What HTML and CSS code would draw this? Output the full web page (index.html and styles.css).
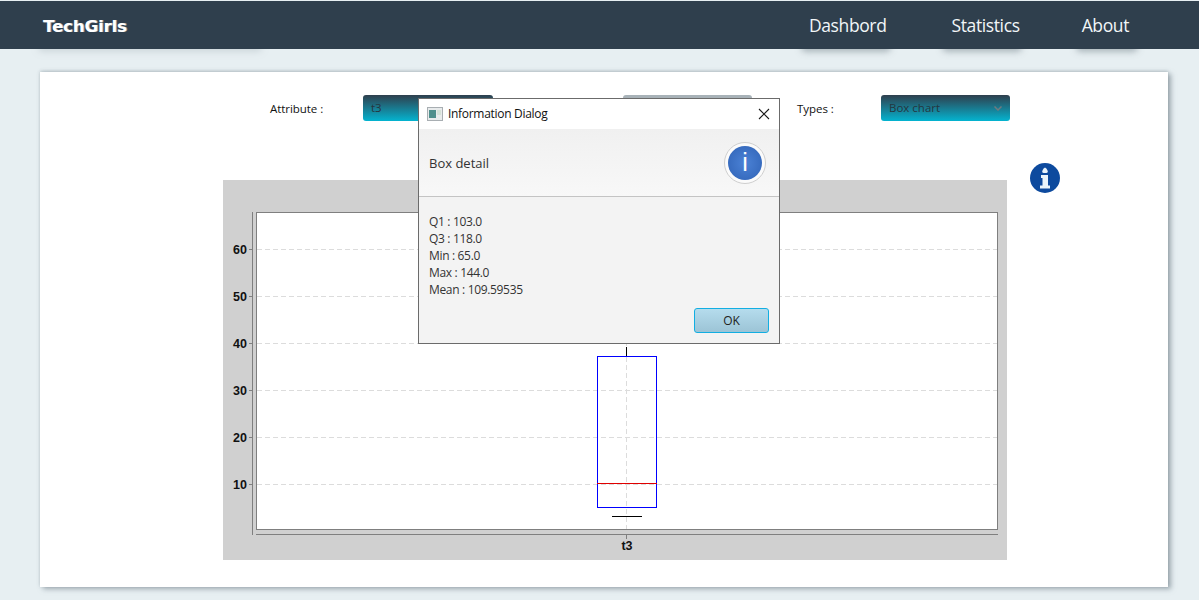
FILE: index.html
```html
<!DOCTYPE html>
<html lang="en">
<head>
<meta charset="utf-8">
<title>TechGirls</title>
<link rel="stylesheet" href="styles.css">
</head>
<body>
<header class="topbar">
  <div class="logo">TechGirls</div>
  <nav class="nav">
    <a class="nav-link nav-dash">Dashbord</a>
    <a class="nav-link nav-stats">Statistics</a>
    <a class="nav-link nav-about">About</a>
  </nav>
</header>
<div class="shadow-strip">
  <span class="blur blur-logo"></span>
  <span class="blur blur-dash"></span>
  <span class="blur blur-stats"></span>
  <span class="blur blur-about"></span>
</div>
<main class="card">
  <div class="controls">
    <span class="label label-attr">Attribute :</span>
    <div class="combo combo-attr">t3</div>
    <div class="combo combo-disabled"></div>
    <span class="label label-types">Types :</span>
    <div class="combo combo-types">Box chart
      <svg class="chevron" width="8" height="5" viewBox="0 0 8 5"><path d="M.5.500l3.500 3.500 3.500-3.500" fill="none" stroke="#6f7a80" stroke-width="1.500"/></svg>
    </div>
  </div>
  <div class="chart-row">
    <svg class="chart" width="784" height="380" viewBox="0 0 784 380">
      <rect width="784" height="380" fill="#d0d0d0"/>
      <rect x="33.5" y="32.5" width="741" height="317" fill="#fff" stroke="#7f7f7f"/>
      <g stroke="#dcdcdc" stroke-dasharray="5 3">
        <path d="M34 69.500h740M34 116.500h740M34 163.500h740M34 210.500h740M34 257.500h740M34 304.500h740"/>
        <path d="M403.500 33v316"/>
      </g>
      <path d="M29.500 32v323M33 354.500h742" stroke="#7f7f7f" fill="none"/>
      <path d="M26 69.500h3M26 116.500h3M26 163.500h3M26 210.500h3M26 257.500h3M26 304.500h3M403.500 355v4" stroke="#7f7f7f"/>
      <g class="ticks">
        <text x="24" y="74" text-anchor="end">60</text>
        <text x="24" y="121" text-anchor="end">50</text>
        <text x="24" y="168" text-anchor="end">40</text>
        <text x="24" y="215" text-anchor="end">30</text>
        <text x="24" y="262" text-anchor="end">20</text>
        <text x="24" y="309" text-anchor="end">10</text>
        <text x="404" y="370" text-anchor="middle">t3</text>
      </g>
      <rect x="374.500" y="176.500" width="59" height="151" fill="none" stroke="#0000ff"/>
      <path d="M374 303.500h60" stroke="#e00000"/>
      <path d="M389 336.500h30M403.500 167v9" stroke="#000"/>
    </svg>
    <svg class="info-icon" width="30" height="30" viewBox="0 0 30 30">
      <circle cx="15" cy="15" r="15" fill="#0d4a9e"/>
      <path d="M15 4.500c2 1.500 2.800 3 2.800 4.200 0 .8-.8 1.300-2.800 1.300s-2.800-.5-2.800-1.300c0-1.200.8-2.700 2.800-4.200z" fill="#eaf4fb"/>
      <path d="M11 12h7v10.500h2v3h-10v-3h2.500v-7.500h-1.500z" fill="#eaf4fb"/>
    </svg>
  </div>
</main>
<section class="dialog">
  <div class="titlebar">
    <svg class="win-icon" width="16" height="14" viewBox="0 0 16 14">
      <rect x=".5" y=".5" width="15" height="13" fill="#e8ebec" stroke="#a8aeb2"/>
      <rect x="2" y="3" width="7" height="8" fill="#4f8f8c"/>
      <rect x="10" y="3" width="4" height="5" fill="#d5e2d8"/>
    </svg>
    <span class="title">Information Dialog</span>
    <svg class="close" width="12" height="12" viewBox="0 0 12 12"><path d="M1 1l10 10M11 1L1 11" stroke="#1a1a1a" stroke-width="1.100"/></svg>
  </div>
  <div class="dialog-head">
    <span>Box detail</span>
    <div class="big-info"><div class="big-info-inner">i</div></div>
  </div>
  <div class="dialog-body">
    <div>Q1 : 103.0</div>
    <div>Q3 : 118.0</div>
    <div>Min : 65.0</div>
    <div>Max : 144.0</div>
    <div>Mean : 109.59535</div>
  </div>
  <div class="dialog-foot"><button class="ok">OK</button></div>
</section>
</body>
</html>
```

FILE: styles.css
```css
* { box-sizing: border-box; }
html, body { margin: 0; height: 600px; overflow: hidden; }
body {
  position: relative;
  background: #e7eff2;
  font-family: "Open Sans", "Noto Sans", sans-serif;
  color: #1c1c1c;
}
.topbar {
  height: 48px;
  margin-top: 1px;
  background: #2f3f4d;
  display: flex;
  align-items: center;
  justify-content: space-between;
  padding: 0 70px 0 43px;
  position: relative;
  z-index: 1;
}
.logo {
  font-family: "DejaVu Sans", sans-serif;
  font-weight: 700;
  font-size: 16.700px;
  letter-spacing: -.2px;
  color: #fff;
  text-shadow: 1px 0 0 rgba(255,255,255,.5);
  margin-top: 1px;
}
.nav { display: flex; font-size: 17.500px; color: #f2f6f8; letter-spacing: -.38px; margin-top: -1px; }
.nav-link { display: block; }
.nav-stats { margin-left: 65px; }
.nav-about { margin-left: 62px; }
.shadow-strip { position: absolute; top: 49px; left: 0; width: 100%; height: 1px; }
.blur { position: absolute; top: -6px; height: 6px; background: #7f8e98; border-radius: 8px; box-shadow: 0 1px 6px 2px rgba(90,105,115,.55); opacity: .75; }
.blur-logo { left: 40px; width: 220px; opacity: .3; }
.blur-dash { left: 803px; width: 86px; }
.blur-stats { left: 944px; width: 76px; }
.blur-about { left: 1078px; width: 58px; }
.card {
  margin: 23px 31px 0 40px;
  height: 515px;
  background: #fff;
  box-shadow: 3px 2px 5px rgba(110,125,135,.6), 0 -1px 3px rgba(110,125,135,.35);
  padding-top: 23px;
}
.controls { display: flex; align-items: flex-start; height: 26px; padding-left: 230px; }
.label { font-size: 11.500px; line-height: 27px; color: #111; letter-spacing: -.05px; }
.label-attr { width: 93px; }
.label-types { width: 84px; margin-left: 45px; }
.combo {
  height: 26px;
  border-radius: 3px;
  background: linear-gradient(#2f3f4d, #04b4d0);
  font-size: 11.500px;
  color: #25363f;
  padding: 4px 8px;
  line-height: 17px;
  display: flex;
  justify-content: space-between;
  align-items: flex-start;
}
.combo-attr { width: 130px; }
.combo-disabled { width: 129px; margin-left: 130px; background: #a8b2b8; }
.combo-types { width: 129px; }
.chevron { margin: 7px 0 0; }
.chart-row { display: flex; align-items: flex-start; padding-left: 183px; margin-top: 59px; position: relative; }
.chart { display: block; }
.info-icon { margin: -17px 0 0 23px; display: block; }
.ticks text { font-family: "Liberation Sans", Arial, sans-serif; font-size: 12.500px; font-weight: 700; fill: #111; }
.dialog {
  position: absolute;
  left: 418px;
  top: 98px;
  width: 362px;
  height: 246px;
  border: 1px solid #6b6b6b;
  background: #f3f3f3;
  z-index: 2;
  display: flex;
  flex-direction: column;
}
.titlebar { height: 30px; background: #fff; display: flex; align-items: center; padding: 0 9px 0 8px; flex: none; }
.win-icon { flex: none; }
.title { font-size: 12px; margin: -2px 0 0 5px; flex: 1; color: #111; letter-spacing: -.3px; }
.dialog-head {
  height: 68px;
  flex: none;
  background: linear-gradient(#f0f0f0, #f8f8f8);
  border-bottom: 1px solid #c4c4c4;
  display: flex;
  align-items: center;
  justify-content: space-between;
  padding: 0 13px 0 10px;
  font-size: 13px;
  color: #333;
}
.big-info { width: 42px; height: 42px; border-radius: 50%; background: #fbfbfb; border: 1px solid #cfcfcf; display: flex; align-items: center; justify-content: center; }
.big-info-inner {
  width: 34px; height: 34px; border-radius: 50%;
  background: radial-gradient(circle, #4b82d6, #2f62b5);
  color: #fff; text-align: center; font-size: 25px; line-height: 33px; font-weight: 300;
  font-family: "Liberation Sans", sans-serif;
}
.dialog-body { padding: 16px 10px 0; font-size: 12px; line-height: 17px; color: #333; flex: none; letter-spacing: -.33px; }
.dialog-foot { display: flex; justify-content: flex-end; padding: 10px 10px 0 0; }
.ok {
  width: 75px; height: 25px; border-radius: 3px;
  border: 1.500px solid #12aee2;
  background: linear-gradient(#b5dced, #9cc4d6);
  font: 12px "Open Sans", sans-serif;
  color: #222;
  padding: 0;
}
```
